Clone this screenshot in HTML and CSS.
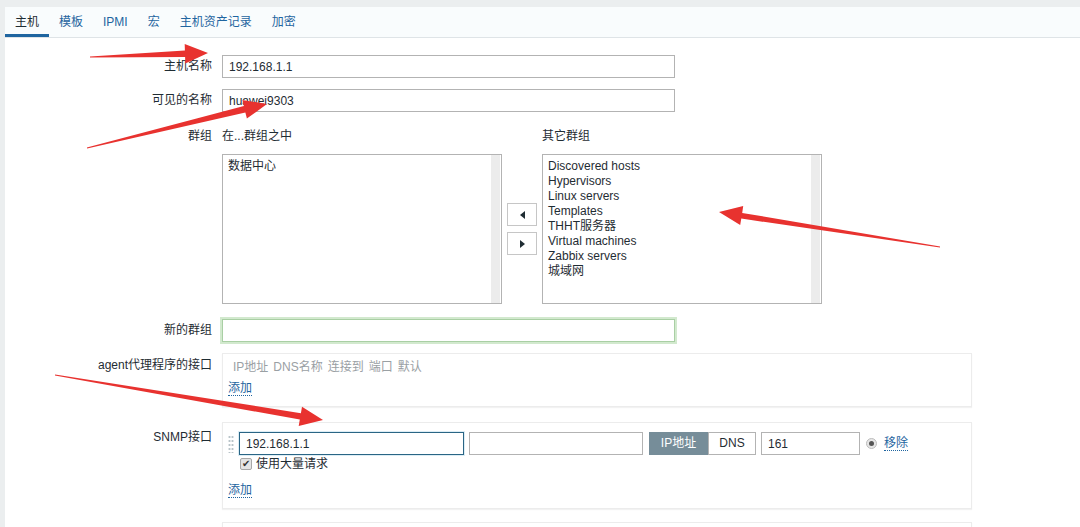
FILE: index.html
```html
<!DOCTYPE html>
<html lang="zh">

<head>
    <meta charset="UTF-8">
    <title>主机</title>
    <link rel="stylesheet" href="styles.css">
</head>

<body>
    <div class="page">
        <ul class="tabs">
            <li class="active">主机</li>
            <li>模板</li>
            <li>IPMI</li>
            <li>宏</li>
            <li>主机资产记录</li>
            <li>加密</li>
        </ul>

        <div class="form">
            <div class="row row-host">
                <div class="label">主机名称</div>
                <div class="field"><input class="text wide" type="text" value="192.168.1.1"></div>
            </div>

            <div class="row row-visible">
                <div class="label">可见的名称</div>
                <div class="field"><input class="text wide" type="text" value="huawei9303"></div>
            </div>

            <div class="row row-groups">
                <div class="label label-top">群组</div>
                <div class="field groups">
                    <div class="group-col">
                        <div class="group-title">在...群组之中</div>
                        <div class="listbox">
                            <div class="list-items">
                                <div>数据中心</div>
                            </div>
                            <div class="scroll"></div>
                        </div>
                    </div>
                    <div class="move-buttons">
                        <div class="move-btn"><span class="tri tri-left"></span></div>
                        <div class="move-btn"><span class="tri tri-right"></span></div>
                    </div>
                    <div class="group-col">
                        <div class="group-title">其它群组</div>
                        <div class="listbox">
                            <div class="list-items">
                                <div>Discovered hosts</div>
                                <div>Hypervisors</div>
                                <div>Linux servers</div>
                                <div>Templates</div>
                                <div>THHT服务器</div>
                                <div>Virtual machines</div>
                                <div>Zabbix servers</div>
                                <div>城域网</div>
                            </div>
                            <div class="scroll"></div>
                        </div>
                    </div>
                </div>
            </div>

            <div class="row row-newgroup">
                <div class="label">新的群组</div>
                <div class="field"><input class="text wide new-group" type="text" value=""></div>
            </div>

            <div class="row row-agent">
                <div class="label label-box">agent代理程序的接口</div>
                <div class="field iface-box agent-box">
                    <div class="iface-head">
                        <span>IP地址</span>
                        <span>DNS名称</span>
                        <span>连接到</span>
                        <span>端口</span>
                        <span>默认</span>
                    </div>
                    <a class="link">添加</a>
                </div>
            </div>

            <div class="row row-snmp">
                <div class="label label-snmp">SNMP接口</div>
                <div class="field iface-box snmp-box">
                    <div class="iface-row">
                        <div class="handle"></div>
                        <input class="text ip focused" type="text" value="192.168.1.1">
                        <input class="text dns" type="text" value="">
                        <div class="toggle">
                            <div class="toggle-btn on">IP地址</div>
                            <div class="toggle-btn">DNS</div>
                        </div>
                        <input class="text port" type="text" value="161">
                        <span class="radio"></span>
                        <a class="link">移除</a>
                    </div>
                    <div class="bulk">
                        <span class="checkbox">&#10004;</span>
                        <span>使用大量请求</span>
                    </div>
                    <a class="link add-snmp">添加</a>
                </div>
            </div>

            <div class="row row-next">
                <div class="label"></div>
                <div class="field iface-box next-box"></div>
            </div>
        </div>
    </div>

    <!-- red arrows drawn over the screenshot -->
    <svg class="marks" width="1080" height="527" viewBox="0 0 1080 527">
        <polygon points="90,57.5 185.1,57 185.3,63.5 208,53 184.7,44 184.9,50.5 90,56.5" />
        <polygon points="87.12,148.6 245.36,112.5 246.9,118.6 267,104 242.4,99.9 243.9,106.1 86.88,147.4" />
        <polygon points="940.08,246.6 742.2,212.9 743.2,206 719,212 740.2,225 741.3,218.6 939.92,247.4" />
        <polygon points="54.92,375.6 299.81,419.6 298.7,426 323,420 302,406.8 300.9,413.2 55.08,374.4" />
    </svg>
</body>

</html>
```

FILE: styles.css
```css
body {
    margin: 0;
    background-color: #ebeeef;
    font-family: "Liberation Sans", Arial, "Noto Sans CJK SC", sans-serif;
    font-size: 12px;
    color: #1f2c33;
    overflow: hidden;
}

.page {
    margin: 7px 0 0 5px;
    background-color: #ffffff;
    height: 520px;
    overflow: hidden;
}

.tabs {
    display: flex;
    margin: 0;
    padding: 0;
    list-style: none;
    height: 30px;
    background-color: #f9fcfd;
    border-bottom: 1px solid #dfe4e7;
}

.tabs li {
    padding: 0 10px;
    line-height: 31px;
    color: #1f65a0;
    cursor: pointer;
}

.tabs li.active {
    color: #1f2c33;
    box-shadow: inset 0 -3px 0 #1f65a0;
}

.form {
    padding-top: 17px;
}

.row {
    display: grid;
    grid-template-columns: 207px 750px;
    column-gap: 10px;
}

.row-host {
    margin-bottom: 11px;
}

.row-visible {
    margin-bottom: 10px;
}

.row-groups {
    margin-bottom: 15px;
}

.row-newgroup {
    margin-bottom: 11px;
}

.row-agent {
    margin-bottom: 15px;
}

.row-snmp {
    margin-bottom: 13px;
}

.label {
    text-align: right;
    line-height: 23px;
    white-space: nowrap;
}

.label-top {
    line-height: 14px;
    padding-top: 7px;
}

.label-box {
    line-height: 14px;
    padding-top: 5px;
}

.label-snmp {
    line-height: 14px;
    padding-top: 8px;
}

.text {
    box-sizing: border-box;
    height: 23px;
    margin: 0;
    padding: 0 6px;
    border: 1px solid #b3b3b3;
    background-color: #ffffff;
    font-family: inherit;
    font-size: 12px;
    color: #1f2c33;
    outline: none;
}

.wide {
    width: 453px;
}

.new-group {
    border-color: #a9cfa4;
    box-shadow: 0 0 0 2px #d2e9ce;
}

/* groups */

.groups {
    display: flex;
}

.group-col {
    width: 280px;
}

.group-title {
    line-height: 14px;
    padding: 7px 0 11px;
}

.listbox {
    box-sizing: border-box;
    display: flex;
    height: 150px;
    border: 1px solid #b3b3b3;
}

.list-items {
    flex: 1;
    padding: 4px 5px;
    line-height: 15px;
}

.scroll {
    width: 9px;
    margin-right: 1px;
    background-color: #ececec;
}

.move-buttons {
    display: flex;
    flex-direction: column;
    justify-content: center;
    gap: 6px;
    width: 30px;
    padding: 32px 5px 0;
}

.move-btn {
    box-sizing: border-box;
    display: flex;
    align-items: center;
    justify-content: center;
    height: 23px;
    border: 1px solid #c6c6c6;
    background-color: #ffffff;
}

.tri {
    width: 0;
    height: 0;
    border-top: 4px solid transparent;
    border-bottom: 4px solid transparent;
}

.tri-left {
    border-right: 5px solid #1f2c33;
}

.tri-right {
    border-left: 5px solid #1f2c33;
}

/* interface boxes */

.iface-box {
    box-sizing: border-box;
    width: 750px;
    border: 1px solid #ececec;
    box-shadow: 0 1px 1px #f2f2f2;
}

.agent-box {
    height: 54px;
    padding: 6px 5px 0;
}

.iface-head {
    display: flex;
    gap: 5px;
    padding-left: 5px;
    margin-bottom: 7px;
    line-height: 14px;
    color: #9aa0a4;
}

.link {
    color: #1f65a0;
    border-bottom: 1px dotted #1f65a0;
    line-height: 14px;
    cursor: pointer;
}

.snmp-box {
    height: 87px;
    padding: 9px 5px 0;
}

.iface-row {
    display: flex;
    align-items: center;
}

.handle {
    width: 6px;
    height: 18px;
    margin-right: 5px;
    background-image: radial-gradient(circle, #b9c4c9 1px, transparent 1.2px);
    background-size: 3px 4px;
}

.ip {
    width: 225px;
}

.focused {
    border-color: #2a6585;
    box-shadow: 0 0 0 1px #dcedf5;
}

.dns {
    width: 174px;
    margin-left: 5px;
}

.toggle {
    display: flex;
    margin-left: 6px;
}

.toggle-btn {
    box-sizing: border-box;
    height: 23px;
    line-height: 21px;
    text-align: center;
    border: 1px solid #b3b3b3;
    width: 48px;
}

.toggle-btn.on {
    width: 59px;
    background-color: #768d99;
    border-color: #768d99;
    color: #ffffff;
}

.port {
    width: 99px;
    margin-left: 5px;
}

.radio {
    box-sizing: border-box;
    position: relative;
    width: 11px;
    height: 11px;
    margin: 0 7px 0 6px;
    border: 1px solid #bdbdbd;
    border-radius: 50%;
    background-color: #e6e6e6;
}

.radio::after {
    content: "";
    position: absolute;
    left: 2px;
    top: 2px;
    width: 5px;
    height: 5px;
    border-radius: 50%;
    background-color: #555555;
}

.bulk {
    display: flex;
    align-items: center;
    gap: 4px;
    height: 16px;
    margin: 1px 0 0 12px;
    line-height: 14px;
}

.checkbox {
    box-sizing: border-box;
    display: inline-flex;
    align-items: center;
    justify-content: center;
    width: 12px;
    height: 12px;
    border: 1px solid #a8a8a8;
    border-radius: 2px;
    background-color: #e4e4e4;
    font-size: 10px;
    color: #333333;
}

.add-snmp {
    display: inline-block;
    margin-top: 11px;
}

.next-box {
    height: 20px;
}

.marks {
    position: absolute;
    top: 0;
    left: 0;
    pointer-events: none;
}

.marks polygon {
    fill: #e8322f;
}
```
